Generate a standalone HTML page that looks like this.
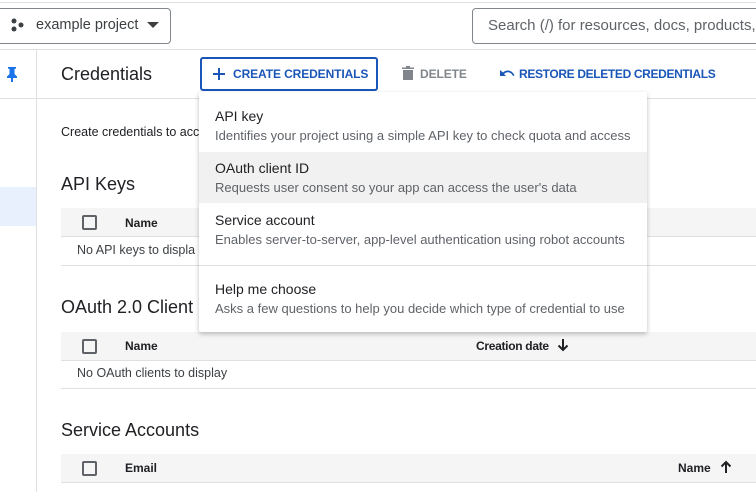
<!DOCTYPE html>
<html><head><style>
*{margin:0;padding:0;box-sizing:border-box}
body{width:756px;height:492px;overflow:hidden;background:#fff;font-family:"Liberation Sans",sans-serif;color:#202124;position:relative}
.a{position:absolute;white-space:nowrap}
.h{font-size:18px;color:#202124}
.th{position:absolute;left:61px;right:0;background:#f5f5f5;border-bottom:1px solid #e0e0e0;height:29px}
.cb{position:absolute;left:21px;top:7px;width:15px;height:15px;border:2px solid #5f6368;border-radius:2px}
.bold{font-size:12px;font-weight:bold;color:#202124}
.line{position:absolute;left:61px;right:0;height:1px;background:#e0e0e0}
.menu{position:absolute;left:199px;top:92px;width:448px;height:240px;background:#fff;box-shadow:0 2px 5px rgba(0,0,0,.25);border-radius:2px}
.t{font-size:14px;color:#202124;position:absolute;left:16px}
.d{font-size:13px;color:#5f6368;position:absolute;left:16px}
.btn{font-size:12px;font-weight:bold;letter-spacing:-.1px}
</style></head><body>
<div class="a" style="left:0;right:0;top:2px;height:1px;background:#e0e0e0"></div>
<div class="a" style="left:-6px;top:8px;width:177px;height:36px;border:1px solid #80868b;border-radius:4px"></div>
<svg class="a" style="left:11px;top:18px" width="14" height="14"><circle cx="3" cy="3" r="2.5" fill="#3c4043"/><circle cx="10" cy="7" r="2.5" fill="#3c4043"/><circle cx="3" cy="11" r="2.5" fill="#3c4043"/></svg>
<div class="a" style="left:36px;top:17px;font-size:14.5px;color:#3c4043">example project</div>
<svg class="a" style="left:146px;top:21px" width="14" height="8"><path d="M1 1h12L7 7z" fill="#3c4043"/></svg>
<div class="a" style="left:472px;top:8px;width:300px;height:36px;border:1px solid #80868b;border-radius:4px"></div>
<div class="a" style="left:488px;top:17px;font-size:15px;color:#5f6368">Search (/) for resources, docs, products,</div>
<div class="a" style="left:0;right:0;top:49px;height:1px;background:#e0e0e0"></div>
<div class="a" style="left:36px;top:50px;width:1px;height:442px;background:#e0e0e0"></div>
<div class="a" style="left:0;top:98px;width:36px;height:1px;background:#e0e0e0"></div>
<div class="a" style="left:0;top:187px;width:36px;height:39px;background:#e8f0fe"></div>
<svg class="a" style="left:6px;top:66px" width="12" height="16"><path d="M2 1h8v1.5L8.5 3v5l2.5 2.5V12H7v4H5v-4H1v-1.5L3.5 8V3L2 2.5z" fill="#1a73e8"/></svg>
<div class="a" style="left:37px;right:0;top:98px;height:1px;background:#e0e0e0"></div>
<div class="a h" style="left:61px;top:64px">Credentials</div>
<div class="a" style="left:200px;top:57px;width:178px;height:34px;border:2px solid #1a56b8;border-radius:3px"></div>
<svg class="a" style="left:212px;top:67px" width="14" height="14"><path d="M7 1v12M1 7h12" stroke="#1a56b8" stroke-width="2"/></svg>
<div class="a btn" style="left:233px;top:67px;color:#1a56b8">CREATE CREDENTIALS</div>
<svg class="a" style="left:402px;top:66px" width="12" height="14"><path d="M0 1.5h12V3H0zM4 0h4v1.5H4zM1 4h10v10H1z" fill="#80868b"/></svg>
<div class="a btn" style="left:420px;top:67px;color:#80868b">DELETE</div>
<svg class="a" style="left:499px;top:68px" width="16" height="10"><path d="M1 2v6h6L5 6c3-3 7-2 9 2l1.5-.7C13 2 7.5 1 4 4.5z" fill="#1a56b8"/></svg>
<div class="a btn" style="left:519px;top:67px;color:#1a56b8;letter-spacing:-.35px">RESTORE DELETED CREDENTIALS</div>
<div class="a" style="left:61px;top:125px;font-size:12.5px">Create credentials to acc</div>
<div class="a h" style="left:61px;top:174px">API Keys</div>
<div class="th" style="top:208px"><div class="cb"></div><div class="a bold" style="left:64px;top:8px">Name</div></div>
<div class="a" style="left:77px;top:243px;font-size:12.5px;color:#3c4043">No API keys to displa</div>
<div class="line" style="top:265px"></div>
<div class="a h" style="left:61px;top:297px">OAuth 2.0 Client I</div>
<div class="th" style="top:332px"><div class="cb"></div><div class="a bold" style="left:64px;top:7px">Name</div><div class="a bold" style="left:415px;top:7px;letter-spacing:-.3px">Creation date</div>
<svg class="a" style="left:496px;top:6px" width="12" height="14"><path d="M6 1v11M1.5 7.5L6 12l4.5-4.5" stroke="#202124" stroke-width="2" fill="none"/></svg></div>
<div class="a" style="left:77px;top:366px;font-size:12.5px;color:#3c4043">No OAuth clients to display</div>
<div class="line" style="top:388px"></div>
<div class="a h" style="left:61px;top:420px">Service Accounts</div>
<div class="th" style="top:454px"><div class="cb"></div><div class="a bold" style="left:64px;top:7px">Email</div><div class="a bold" style="left:617px;top:7px">Name</div>
<svg class="a" style="left:659px;top:6px" width="12" height="14"><path d="M6 13V2M1.5 6.5L6 2l4.5 4.5" stroke="#202124" stroke-width="2" fill="none"/></svg></div>
<div class="menu">
<div class="t" style="top:16px">API key</div>
<div class="d" style="top:36px">Identifies your project using a simple API key to check quota and access</div>
<div class="a" style="left:0;top:60px;width:448px;height:51px;background:#f1f1f1"></div>
<div class="t" style="top:68px">OAuth client ID</div>
<div class="d" style="top:88px">Requests user consent so your app can access the user's data</div>
<div class="t" style="top:120px">Service account</div>
<div class="d" style="top:140px">Enables server-to-server, app-level authentication using robot accounts</div>
<div class="a" style="left:0;top:173px;width:448px;height:1px;background:#e0e0e0"></div>
<div class="t" style="top:189px">Help me choose</div>
<div class="d" style="top:209px">Asks a few questions to help you decide which type of credential to use</div>
</div>
</body></html>
